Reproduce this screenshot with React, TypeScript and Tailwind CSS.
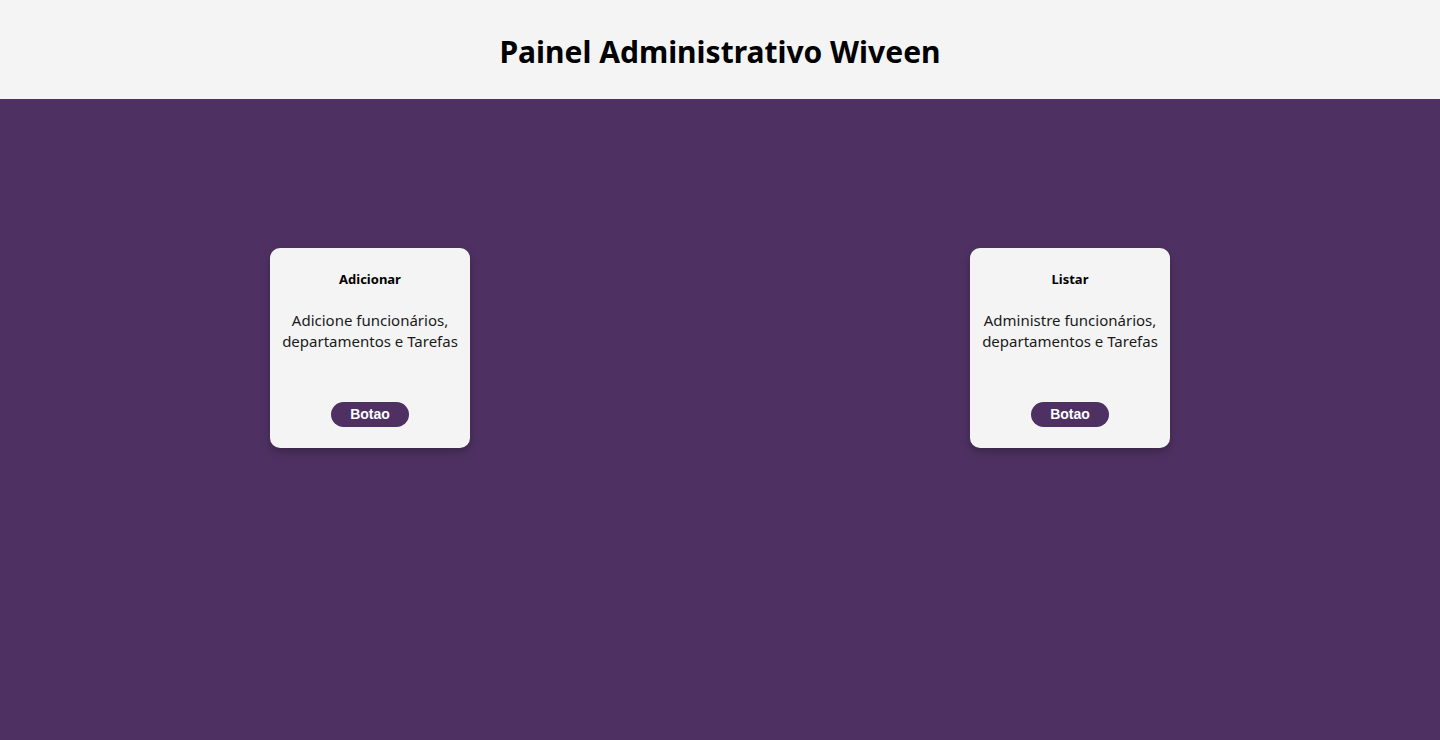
import React from "react";

const cards = [
  { title: "Adicionar", text: "Adicione funcionários, departamentos e Tarefas" },
  { title: "Listar", text: "Administre funcionários, departamentos e Tarefas" },
];

function Card({ title, text }: { title: string; text: string }) {
  return (
    <div className="w-[200px] h-[200px] bg-[#f4f4f4] rounded-[10px] shadow-[0_4px_8px_rgba(0,0,0,0.25)] flex flex-col items-center pt-[22px] pb-[21px] px-1 text-center">
      <h2 className="text-[13px] font-bold text-black leading-[18px]">{title}</h2>
      <p className="mt-[22px] text-[15px] leading-[21px] text-[#1a1a1a] px-2">{text}</p>
      <button className="mt-auto w-[78px] h-[25px] rounded-full bg-[#4e3162] text-white text-[14px] font-bold font-['Liberation_Sans',Arial,sans-serif]">
        Botao
      </button>
    </div>
  );
}

export default function App() {
  return (
    <div className="min-h-[740px] flex flex-col bg-[#4e3162] font-['Noto_Sans',sans-serif]">
      <header className="h-[99px] bg-[#f4f4f4] flex items-center justify-center pt-1">
        <h1 className="text-[30px] font-bold text-black">Painel Administrativo Wiveen</h1>
      </header>
      <main className="flex-1 flex justify-around items-start px-5 pt-[149px]">
        {cards.map((c) => (
          <Card key={c.title} title={c.title} text={c.text} />
        ))}
      </main>
    </div>
  );
}
